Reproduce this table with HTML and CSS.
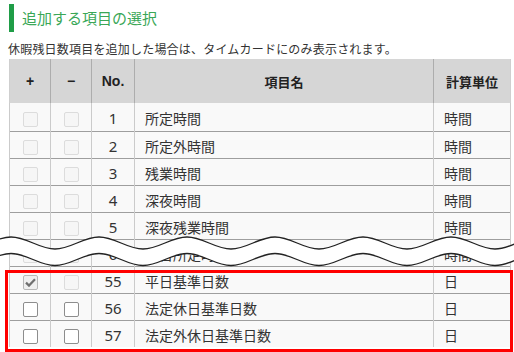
FILE: index.html
```html
<!DOCTYPE html>
<html>
<head>
  <meta charset="utf-8">
  <link rel="stylesheet" href="styles.css">
</head>
<body>
  <div class="page">
    <h2 class="section-title">追加する項目の選択</h2>
    <p class="note">休暇残日数項目を追加した場合は、タイムカードにのみ表示されます。</p>

    <table class="items">
      <colgroup>
        <col class="w-add">
        <col class="w-del">
        <col class="w-no">
        <col class="w-name">
        <col class="w-unit">
      </colgroup>
      <thead>
        <tr>
          <th class="sym">+</th>
          <th class="sym">−</th>
          <th class="sym">No.</th>
          <th>項目名</th>
          <th>計算単位</th>
        </tr>
      </thead>
      <tbody>
        <tr>
          <td class="box"><span class="check off"></span></td>
          <td class="box"><span class="check off"></span></td>
          <td class="no">1</td>
          <td class="name">所定時間</td>
          <td class="unit">時間</td>
        </tr>
        <tr>
          <td class="box"><span class="check off"></span></td>
          <td class="box"><span class="check off"></span></td>
          <td class="no">2</td>
          <td class="name">所定外時間</td>
          <td class="unit">時間</td>
        </tr>
        <tr>
          <td class="box"><span class="check off"></span></td>
          <td class="box"><span class="check off"></span></td>
          <td class="no">3</td>
          <td class="name">残業時間</td>
          <td class="unit">時間</td>
        </tr>
        <tr>
          <td class="box"><span class="check off"></span></td>
          <td class="box"><span class="check off"></span></td>
          <td class="no">4</td>
          <td class="name">深夜時間</td>
          <td class="unit">時間</td>
        </tr>
        <tr>
          <td class="box"><span class="check off"></span></td>
          <td class="box"><span class="check off"></span></td>
          <td class="no">5</td>
          <td class="name">深夜残業時間</td>
          <td class="unit">時間</td>
        </tr>
        <tr>
          <td class="box"><span class="check off"></span></td>
          <td class="box"><span class="check off"></span></td>
          <td class="no">6</td>
          <td class="name">休日所定時間</td>
          <td class="unit">時間</td>
        </tr>
        <tr>
          <td class="box">
            <span class="check done">
              <svg width="11" height="9" viewBox="0 0 11 9"><path d="M1 4.6l3 3L10 1.2" fill="none" stroke="#6f6f6f" stroke-width="2.2"/></svg>
            </span>
          </td>
          <td class="box"><span class="check off"></span></td>
          <td class="no">55</td>
          <td class="name">平日基準日数</td>
          <td class="unit">日</td>
        </tr>
        <tr>
          <td class="box"><span class="check"></span></td>
          <td class="box"><span class="check"></span></td>
          <td class="no">56</td>
          <td class="name">法定休日基準日数</td>
          <td class="unit">日</td>
        </tr>
        <tr>
          <td class="box"><span class="check"></span></td>
          <td class="box"><span class="check"></span></td>
          <td class="no">57</td>
          <td class="name">法定外休日基準日数</td>
          <td class="unit">日</td>
        </tr>
      </tbody>
    </table>

    <!-- break marker: rows 7-54 are skipped -->
    <svg class="cut" width="514" height="352" viewBox="0 0 514 352">
      <path fill="#fff" d="M -33 249 C -17 249 -5 237 11 237 S 39 249 55 249 S 83 237 99 237 S 127 249 143 249 S 171 237 187 237 S 215 249 231 249 S 259 237 275 237 S 303 249 319 249 S 347 237 363 237 S 391 249 407 249 S 435 237 451 237 S 479 249 495 249 S 523 237 539 237
        L 539 253.5
        C 523 253.5 511 265.5 495 265.5 S 467 253.5 451 253.5 S 423 265.5 407 265.5 S 379 253.5 363 253.5 S 335 265.5 319 265.5 S 291 253.5 275 253.5 S 247 265.5 231 265.5 S 203 253.5 187 253.5 S 159 265.5 143 265.5 S 115 253.5 99 253.5 S 71 265.5 55 265.5 S 27 253.5 11 253.5 S -17 265.5 -33 265.5 Z"/>
      <g fill="none" stroke="#222" stroke-width="1.3">
        <path id="wave" d="M -33 249 C -17 249 -5 237 11 237 S 39 249 55 249 S 83 237 99 237 S 127 249 143 249 S 171 237 187 237 S 215 249 231 249 S 259 237 275 237 S 303 249 319 249 S 347 237 363 237 S 391 249 407 249 S 435 237 451 237 S 479 249 495 249 S 523 237 539 237"/>
        <use href="#wave" transform="translate(0 16.5)"/>
      </g>
    </svg>

    <div class="highlight"></div>
  </div>
</body>
</html>
```

FILE: styles.css
```css
html, body {
  margin: 0;
  padding: 0;
  background: #fff;
}

body {
  font-family: "Noto Sans CJK JP", sans-serif;
  color: #333;
}

.page {
  position: relative;
  width: 514px;
  height: 352px;
  overflow: hidden;
  padding: 4px 0 0 9px;
  box-sizing: border-box;
}

.section-title {
  margin: 0;
  height: 28px;
  line-height: 28px;
  padding-left: 8px;
  border-left: 5px solid #1f9d47;
  font-size: 15px;
  font-weight: normal;
  color: #3aa757;
}

.note {
  margin: 9px 0 2px -1px;
  font-size: 12px;
  line-height: 16px;
  letter-spacing: 0.2px;
}

/* item table */
.items {
  border-collapse: collapse;
  table-layout: fixed;
  width: 501px;
}

.w-add,
.w-del { width: 41px; }
.w-no { width: 43px; }
.w-name { width: 299px; }
.w-unit { width: 77px; }

.items th {
  height: 44px;
  padding: 0;
  background: #d6d6d6;
  border-left: 1px solid #adadad;
  border-right: 1px solid #adadad;
  font-family: "Liberation Sans", "Noto Sans CJK JP", sans-serif;
  font-size: 13px;
  font-weight: bold;
  color: #222;
  text-align: center;
}

.items th.sym {
  font-size: 14px;
}

.items th:first-child { border-left-color: #cfcfcf; }
.items th:last-child { border-right-color: #cfcfcf; }

.items td {
  height: 27px;
  padding: 2px 0 0;
  box-sizing: border-box;
  background: #f9f9f9;
  border-left: 1px solid #cbcbcb;
  border-right: 1px solid #cbcbcb;
  border-top: 1px solid #9e9e9e;
  font-size: 14px;
  vertical-align: middle;
}

.items tbody tr:first-child td {
  border-top: none;
  height: 28px;
}

.items td.box { text-align: center; }

.items td.no {
  text-align: center;
  font-family: "Noto Sans", sans-serif;
  font-size: 15px;
}

.items td.name,
.items td.unit {
  padding-left: 10px;
}

/* checkboxes */
.check {
  display: inline-flex;
  align-items: center;
  justify-content: center;
  width: 15px;
  height: 15px;
  box-sizing: border-box;
  border: 1px solid #8d8d8d;
  border-radius: 2px;
  background: #fff;
  vertical-align: middle;
}

.check.off {
  border-color: #dcdcdc;
  background: #f6f6f6;
}

.check.done {
  border-color: #b8b8b8;
  background: #efefef;
}

/* overlays */
.cut {
  position: absolute;
  top: 0;
  left: 0;
  pointer-events: none;
}

.highlight {
  position: absolute;
  left: 5px;
  top: 270px;
  width: 508px;
  height: 82px;
  box-sizing: border-box;
  border: 3px solid #f00;
  pointer-events: none;
}
```
